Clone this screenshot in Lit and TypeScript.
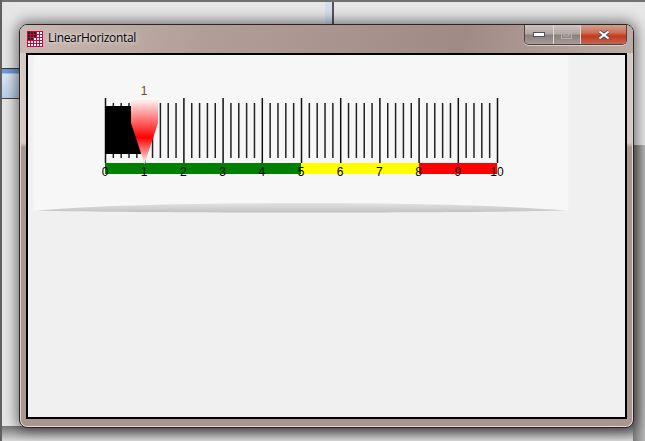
import { LitElement, html, css, svg } from "lit";
import { customElement } from "lit/decorators.js";

const X0 = 105.5, STEP = 39.2;
const majors = Array.from({ length: 11 }, (_, i) => i);
const minors: number[] = [];
for (let i = 0; i < 50; i++) if (i % 5) minors.push(X0 + (STEP / 5) * i);

@customElement("app-root")
export class AppRoot extends LitElement {
  static styles = css`
    :host { display: block; width: 645px; height: 441px; overflow: hidden; position: relative; background: #e6e6e6; font-family: "Liberation Sans", Arial, sans-serif; }
    .desk { position: absolute; inset: 0; }
    .topline { position: absolute; left: 0; top: 0; right: 0; height: 2px; background: #707070; }
    .leftline { position: absolute; left: 0; top: 0; bottom: 0; width: 2px; background: #606060; }
    .strip { position: absolute; left: 325px; top: 2px; width: 7px; height: 24px; background: #d3dfee; }
    .vline { position: absolute; left: 332px; top: 0; width: 2px; height: 26px; background: #555; }
    .blue { position: absolute; left: 2px; top: 68px; width: 20px; height: 31px; border-top: 1px solid #2c3a4c; border-bottom: 1px solid #444; background: linear-gradient(#6f9bd3 0, #6f9bd3 4px, #dbe7f6 5px, #bcd0ea); box-sizing: border-box; }
    .low-r { position: absolute; right: 0; top: 145px; width: 14px; bottom: 0; background: linear-gradient(90deg, #6e6e6e, #b8b8b8); }
    .low-b { position: absolute; left: 0; right: 12px; top: 426px; bottom: 0; background: linear-gradient(#777, #d8d8d8); }

    .win { position: absolute; left: 19px; top: 24px; width: 615px; height: 404px; box-sizing: border-box; border: 1px solid #2b2523; border-radius: 8px; background: linear-gradient(#d6cac6 0, #d6cac6 118px, #aa9691 122px, #aa9691 100%); box-shadow: inset 0 0 0 1px #e0d6d3, 0 0 14px 2px rgba(0,0,0,.55); display: flex; flex-direction: column; }
    .bar { height: 28px; display: flex; align-items: center; padding: 0 0 0 7px; gap: 5px; flex: none; position: relative; border-radius: 7px 7px 0 0; background: linear-gradient(100deg, #c9b9b4 0, #b29e98 30%, #a08a85 72%, #bcaba6 100%); }
    .title { font-size: 12px; line-height: 14px; margin-top: -2px; color: #000; text-shadow: 0 0 7px rgba(255,255,255,.8), 0 0 3px rgba(255,255,255,.5); font-family: "Open Sans", "Liberation Sans", sans-serif; letter-spacing: -0.32px; }
    .ctrl { position: absolute; right: 6px; top: 0; height: 20px; width: 103px; display: flex; box-sizing: border-box; border: 1px solid #4f4542; border-top: none; border-radius: 0 0 5px 5px; overflow: hidden; box-shadow: 0 1px 0 rgba(255,255,255,.5); }
    .btn { display: flex; align-items: center; justify-content: center; background: linear-gradient(#cfc4c1, #b3a7a4 45%, #8c807d 55%, #a89c99); border-right: 1px solid #e0d8d6; box-sizing: border-box; }
    .min { width: 29px; } .max { width: 27px; }
    .close { flex: 1; border-right: none; background: linear-gradient(#d0a090, #cc7158 40%, #c9371a 58%, #bb6a55); }
    .client { margin: 0 6px 8px 6px; flex: 1; box-sizing: border-box; border: 2px solid #000; background: #f0f0f0; position: relative; overflow: hidden; }
    .gauge { position: absolute; left: -28px; top: -55px; }
    .panel { position: absolute; left: 6px; top: 0; width: 534px; height: 155px; background: #f7f7f7; box-shadow: 0 0 4px #f7f7f7; }
    text { font: 12px "Liberation Sans", Arial, sans-serif; fill: #000; }
  `;

  render() {
    const icon = [];
    for (let r = 0; r < 5; r++) for (let c = 0; c < 5; c++) {
      const dark = (r < 2 && c < 3) || (r === 2 && c < 2);
      icon.push(svg`<rect x=${1 + c * 3} y=${1 + r * 3} width="2" height="2" fill=${dark ? "#222" : "#fff"}/>`);
    }
    return html`
      <div class="desk">
        <div class="strip"></div><div class="vline"></div>
        <div class="blue"></div>
        <div class="low-r"></div><div class="low-b"></div>
        <div class="topline"></div><div class="leftline"></div>
      </div>
      <div class="win">
        <div class="bar">
          <svg width="16" height="16" viewBox="0 0 16 16"><rect width="16" height="16" fill="#c8063e"/>${icon}</svg>
          <span class="title">LinearHorizontal</span>
          <div class="ctrl">
            <div class="btn min"><svg width="12" height="6"><rect x=".5" y=".5" width="11" height="4" fill="#fff" stroke="#4a4f70"/></svg></div>
            <div class="btn max"><svg width="12" height="10"><rect x=".5" y=".5" width="10" height="8" fill="none" stroke="#b9afac"/><rect x="3" y="3" width="5" height="3" fill="none" stroke="#b9afac"/></svg></div>
            <div class="btn close"><svg width="14" height="10" viewBox="0 0 14 10"><path d="M2.500 1.500l9 7M11.500 1.500l-9 7" stroke="#4a4a55" stroke-width="3.600" fill="none"/><path d="M2.500 1.500l9 7M11.500 1.500l-9 7" stroke="#fff" stroke-width="2.200"/></svg></div>
          </div>
        </div>
        <div class="client">
          <div class="panel"></div>
          <svg class="gauge" width="600" height="230" viewBox="0 0 600 230">
            <defs>
              <linearGradient id="ptr" x1="0" y1="0" x2="0" y2="1">
                <stop offset="0" stop-color="#fff"/>
                <stop offset=".6" stop-color="#f00"/>
                <stop offset="1" stop-color="#fff"/>
              </linearGradient>
              <linearGradient id="ell" x1="0" y1="0" x2="0" y2="1">
                <stop offset="0" stop-color="#e2e2e2"/>
                <stop offset="1" stop-color="#c2c2c2"/>
              </linearGradient>
            </defs>
            <path d="M36 210.500C100 205 200 203 301 203C400 203 500 205 566 210.500C500 212 400 212.500 301 212.500C200 212.500 100 212 36 210.500Z" fill="url(#ell)"/>
            <rect x="105" y="163" width="196" height="11" fill="#008000"/>
            <rect x="301" y="163" width="118" height="11" fill="#ff0"/>
            <rect x="419" y="163" width="78" height="11" fill="#f00"/>
            ${minors.map(x => svg`<line x1=${x} x2=${x} y1="103" y2="158" stroke="#222" stroke-width="1.500"/>`)}
            ${majors.map(i => svg`<line x1=${X0 + STEP * i} x2=${X0 + STEP * i} y1="98" y2="163" stroke="#111" stroke-width="1.500"/>`)}
            <rect x="105" y="106" width="38" height="48" fill="#000"/>
            <path d="M131 98H158V123L144.500 164L131 123Z" fill="url(#ptr)"/>
            ${majors.map(i => svg`<text x=${X0 - 0.5 + STEP * i} y="176" text-anchor="middle">${i}</text>`)}
            <text x="144" y="95" text-anchor="middle" style="fill:#7a4a10">1</text>
          </svg>
        </div>
      </div>
    `;
  }
}
